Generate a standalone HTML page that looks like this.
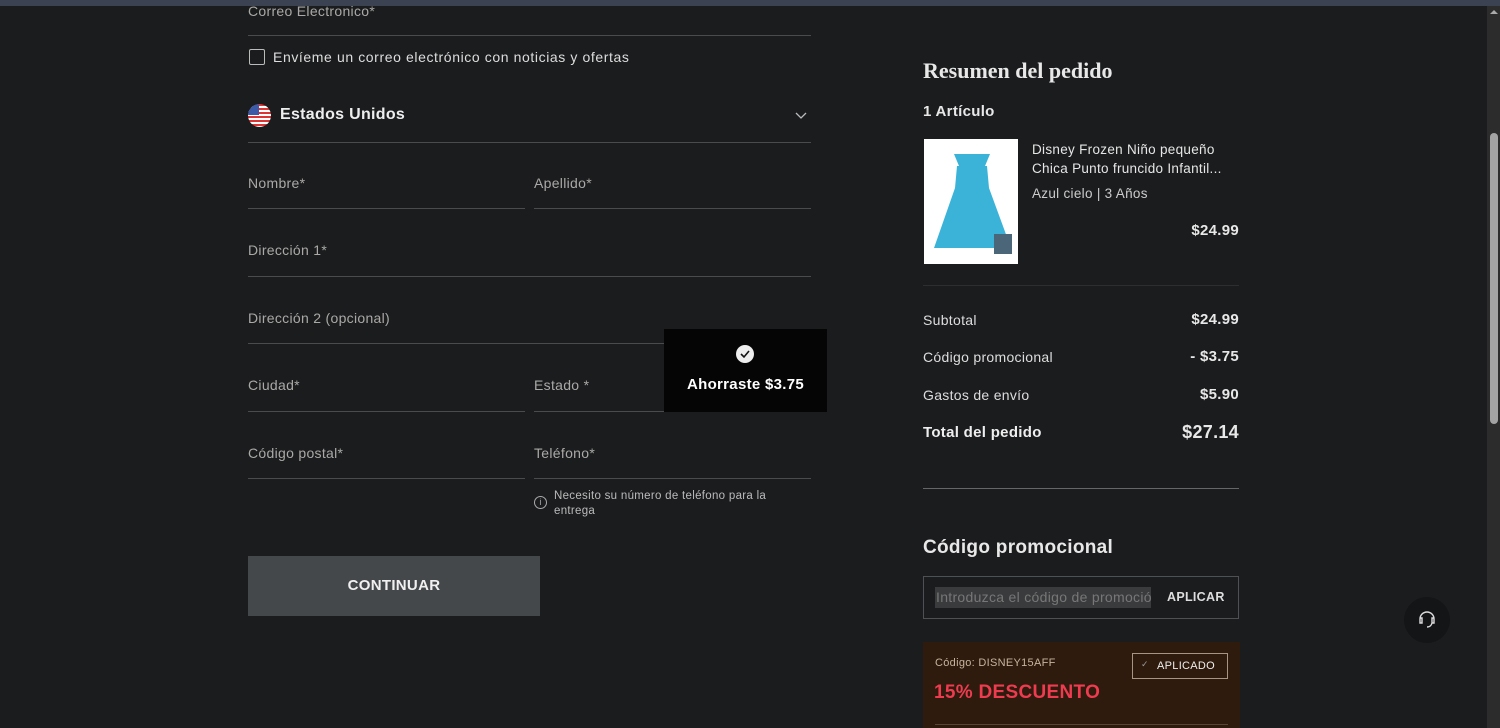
<!DOCTYPE html>
<html><head><meta charset="utf-8"><style>
*{box-sizing:border-box;margin:0;padding:0}
body{width:1500px;height:728px;overflow:hidden;background:#1b1c1e;font-family:"Liberation Sans",sans-serif;color:#e6e6e6;position:relative;letter-spacing:0.3px}
.a{position:absolute}
.lab{position:absolute;font-size:14px;color:#aaa9a6}
.ln{position:absolute;height:1px;background:#4a4b4d}
.r{position:absolute;font-size:14px;color:#ddd}
.rv{position:absolute;font-size:15px;font-weight:bold;color:#e8e8e8;text-align:right}
</style></head><body>
<div class="a" style="left:0;top:0;width:1500px;height:6px;background:#3b4252"></div>
<div class="a" style="left:1487px;top:6px;width:13px;height:722px;background:#2c2c2c"></div>
<div class="a" style="left:1490px;top:133px;width:8px;height:291px;background:#a3a3a3;border-radius:4px"></div>
<div class="a" style="left:1490px;top:10px;width:0;height:0;border-left:4px solid transparent;border-right:4px solid transparent;border-bottom:4px solid #aaa"></div>

<div class="lab" style="left:248px;top:3px">Correo Electronico*</div>
<div class="ln" style="left:248px;top:35px;width:563px"></div>
<div class="a" style="left:249px;top:49px;width:16px;height:16px;border:1.5px solid #bbb;border-radius:2px"></div>
<div class="a" style="left:273px;top:49px;font-size:14px;color:#ddd;letter-spacing:0.6px">Envíeme un correo electrónico con noticias y ofertas</div>
<div class="a" style="left:248px;top:104px;width:23px;height:23px;border-radius:50%;background:repeating-linear-gradient(#d33 0 2px,#fff 2px 4px);overflow:hidden"><div style="width:11px;height:11px;background:#3b5aa8"></div></div>
<div class="a" style="left:280px;top:106px;font-size:16px;color:#eee;font-weight:bold">Estados Unidos</div>
<svg class="a" style="left:795px;top:112px" width="12" height="8"><path d="M1 1l5 5 5-5" stroke="#bbb" fill="none" stroke-width="1.3"/></svg>
<div class="ln" style="left:248px;top:142px;width:563px"></div>

<div class="lab" style="left:248px;top:175px">Nombre*</div>
<div class="ln" style="left:248px;top:208px;width:277px"></div>
<div class="lab" style="left:534px;top:175px">Apellido*</div>
<div class="ln" style="left:534px;top:208px;width:277px"></div>
<div class="lab" style="left:248px;top:242px">Dirección 1*</div>
<div class="ln" style="left:248px;top:276px;width:563px"></div>
<div class="lab" style="left:248px;top:310px">Dirección 2 (opcional)</div>
<div class="ln" style="left:248px;top:343px;width:563px"></div>
<div class="lab" style="left:248px;top:377px">Ciudad*</div>
<div class="ln" style="left:248px;top:411px;width:277px"></div>
<div class="lab" style="left:534px;top:377px">Estado *</div>
<div class="ln" style="left:534px;top:411px;width:277px"></div>
<div class="lab" style="left:248px;top:445px">Código postal*</div>
<div class="ln" style="left:248px;top:478px;width:277px"></div>
<div class="lab" style="left:534px;top:445px">Teléfono*</div>
<div class="ln" style="left:534px;top:478px;width:277px"></div>
<div class="a" style="left:534px;top:496px;width:13px;height:13px;border:1px solid #aaa;border-radius:50%;font-size:9px;text-align:center;line-height:11px;color:#aaa">i</div>
<div class="a" style="left:554px;top:489px;font-size:11.5px;color:#bbb;line-height:15px;width:240px">Necesito su número de teléfono para la entrega</div>

<div class="a" style="left:664px;top:329px;width:163px;height:83px;background:#050505"></div>
<div class="a" style="left:736px;top:345px;width:18px;height:18px;border-radius:50%;background:#eee"></div>
<svg class="a" style="left:736px;top:345px" width="18" height="18"><path d="M5 9l3 3 5-6" stroke="#111" stroke-width="1.6" fill="none"/></svg>
<div class="a" style="left:664px;top:376px;width:163px;text-align:center;font-size:15px;font-weight:bold;color:#fff">Ahorraste $3.75</div>

<div class="a" style="left:248px;top:556px;width:292px;height:60px;background:#45484b;text-align:center;line-height:60px;font-size:15px;font-weight:bold;color:#f0f0f0">CONTINUAR</div>

<div class="a" style="left:923px;top:58px;font-family:'Liberation Serif',serif;font-size:22px;font-weight:bold;color:#e8e8e8;letter-spacing:0">Resumen del pedido</div>
<div class="a" style="left:923px;top:103px;font-size:15px;font-weight:bold;color:#e8e8e8">1 Artículo</div>
<div class="a" style="left:924px;top:139px;width:94px;height:125px;background:#fff"></div>
<svg class="a" style="left:924px;top:139px" width="94" height="125"><path d="M30 15l5 12h26l5-12M33 27h30l2 22 22 60H10l21-60z" fill="#3bb3d8"/><rect x="70" y="95" width="18" height="20" fill="#4a6678"/></svg>
<div class="a" style="left:1032px;top:140px;font-size:13.5px;line-height:19px;color:#e6e6e6;width:205px">Disney Frozen Niño pequeño Chica Punto fruncido Infantil...</div>
<div class="a" style="left:1032px;top:186px;font-size:13.5px;color:#ccc">Azul cielo | 3 Años</div>
<div class="rv" style="left:1140px;top:222px;width:99px">$24.99</div>
<div class="ln" style="left:923px;top:285px;width:316px;background:#2d2e30"></div>

<div class="r" style="left:923px;top:312px">Subtotal</div><div class="rv" style="left:1140px;top:311px;width:99px">$24.99</div>
<div class="r" style="left:923px;top:349px">Código promocional</div><div class="rv" style="left:1140px;top:348px;width:99px">- $3.75</div>
<div class="r" style="left:923px;top:387px">Gastos de envío</div><div class="rv" style="left:1140px;top:386px;width:99px">$5.90</div>
<div class="r" style="left:923px;top:424px;font-weight:bold;font-size:15px;color:#eee">Total del pedido</div><div class="rv" style="left:1140px;top:422px;width:99px;font-size:18px">$27.14</div>
<div class="ln" style="left:923px;top:488px;width:316px;background:#666"></div>

<div class="a" style="left:923px;top:537px;font-size:19px;font-weight:bold;color:#e8e8e8">Código promocional</div>
<div class="a" style="left:923px;top:576px;width:316px;height:43px;border:1px solid #4e5154"></div>
<div class="a" style="left:935px;top:587px;width:216px;height:21px;background:#3a3b3d;font-size:14px;color:#777;padding-left:1px;line-height:21px;overflow:hidden;white-space:nowrap">Introduzca el código de promoción</div>
<div class="a" style="left:1167px;top:590px;font-size:12.5px;font-weight:bold;color:#ddd">APLICAR</div>

<div class="a" style="left:923px;top:642px;width:317px;height:86px;background:#2e1b0d"></div>
<div class="a" style="left:935px;top:657px;font-size:11px;color:#c8b49c">Código: DISNEY15AFF</div>
<div class="a" style="left:1132px;top:653px;width:96px;height:26px;border:1px solid #a89580;font-size:11px;color:#eee;line-height:24px;padding-left:24px">APLICADO</div>
<div class="a" style="left:1141px;top:659px;font-size:9px;color:#999">✓</div>
<div class="a" style="left:934px;top:682px;font-size:19px;font-weight:bold;color:#ee3b50">15% DESCUENTO</div>
<div class="ln" style="left:935px;top:724px;width:293px;background:#5a4434"></div>

<div class="a" style="left:1404px;top:597px;width:46px;height:46px;border-radius:50%;background:#141517"></div>
<svg class="a" style="left:1417px;top:608px" width="20" height="22"><path d="M3 11a7 7 0 0 1 14 0M3 11v4h2v-5H3M17 11v4h-2v-5h2M15 15q-1 4-5 4" stroke="#ddd" stroke-width="1.4" fill="none"/></svg>
</body></html>
